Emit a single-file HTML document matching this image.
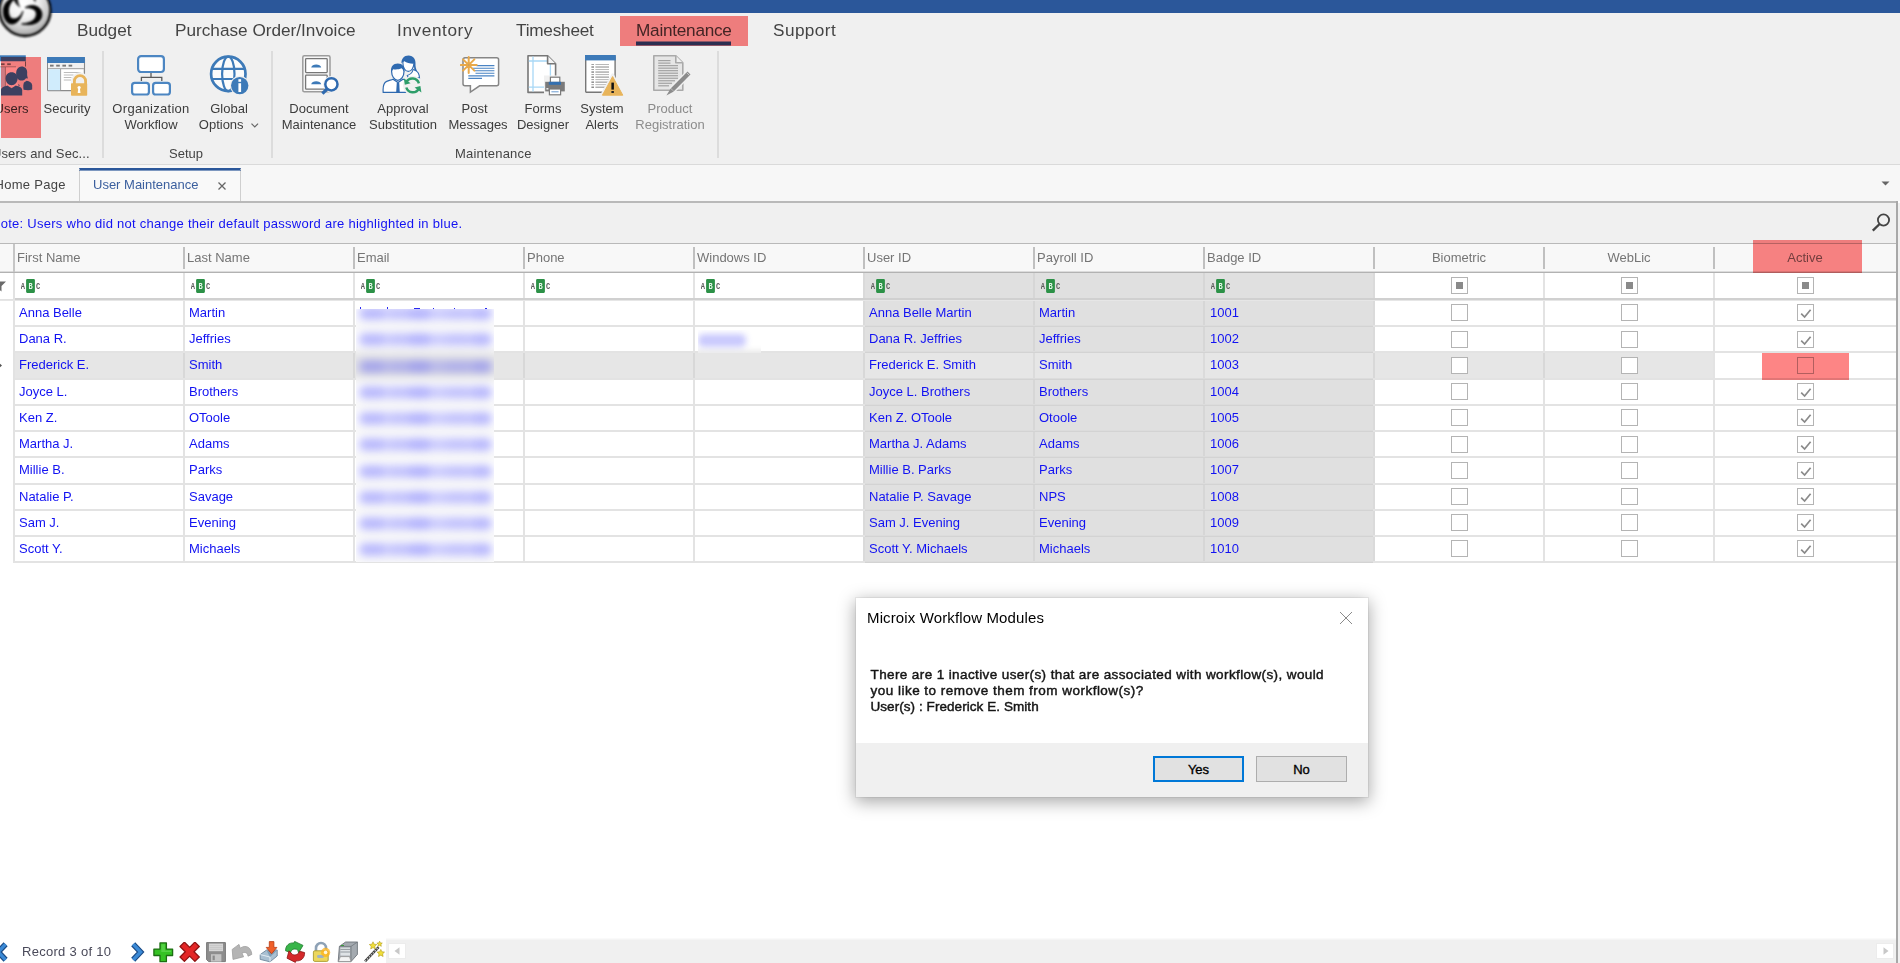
<!DOCTYPE html>
<html lang="en"><head><meta charset="utf-8"><title>User Maintenance</title>
<style>
html,body{margin:0;padding:0;}
body{width:1900px;height:963px;overflow:hidden;position:relative;background:#fff;font-family:"Liberation Sans",sans-serif;font-size:13px;color:#3c3c3c;}
.a{position:absolute;}
.t{position:absolute;white-space:nowrap;}
.mt{position:absolute;top:16px;height:30px;line-height:29px;font-size:17.2px;color:#444;white-space:nowrap;}
.rl{position:absolute;white-space:nowrap;text-align:center;font-size:13px;line-height:16px;color:#3c3c3c;transform:translateX(-50%);}
.gl{position:absolute;top:146px;height:16px;line-height:16px;font-size:13px;color:#444;white-space:nowrap;}
.sep{position:absolute;top:51px;height:107px;width:2px;background:#dcdcdc;}
.hd{position:absolute;top:244px;height:28px;line-height:28px;font-size:13px;color:#757575;white-space:nowrap;}
.hs{position:absolute;top:247px;height:22px;width:2px;background:#c0c0c0;}
.vl{position:absolute;width:2px;background:#e3e3e3;}
.hl{position:absolute;height:2px;background:#e3e3e3;}
.c{position:absolute;white-space:nowrap;font-size:13px;color:#1212f2;height:27px;line-height:27px;}
.cb{position:absolute;width:15px;height:15px;border:1px solid #b4b4b4;background:#fff;}
.abc{position:absolute;width:20px;height:14px;}
.blur{position:absolute;filter:blur(2.2px);}
</style></head><body>

<div class="a" style="left:0;top:0;width:1900px;height:13px;background:#2b579a"></div>
<div class="a" style="left:0;top:13px;width:1900px;height:151px;background:#f0f0f0"></div>
<div class="a" style="left:0;top:164px;width:1900px;height:1px;background:#dadada"></div>
<svg class="a" style="left:-2px;top:-2px" width="56" height="42" viewBox="0 0 56 42"><defs><radialGradient id="lg" cx="0.46" cy="0.36" r="0.62"><stop offset="0" stop-color="#ffffff"/><stop offset="0.45" stop-color="#f2f2f2"/><stop offset="0.8" stop-color="#cacaca"/><stop offset="1" stop-color="#a8a8a8"/></radialGradient></defs><circle cx="27" cy="12.500" r="25.600" fill="url(#lg)"/></svg><svg class="a" style="left:-2px;top:-2px;filter:blur(0.8px)" width="56" height="42" viewBox="0 0 56 42"><circle cx="27" cy="12.500" r="25.500" fill="none" stroke="#000" stroke-width="2.300"/>
<path d="M13.500 0C8 3 5 8.500 5.300 14C5.600 21 9.500 26.200 14 26C19.500 25.800 23.500 20 25 13C23 17.500 19.500 21 16 21C12 21 10.300 17 10.500 12C10.700 7.500 13.500 3 17.500 0z" fill="#000" stroke="#000" stroke-width="0.900"/>
<path d="M27 9.700C31 7 37 6.800 40.500 9.500C44.500 12.500 45 18 42 22C38 27 30 27.300 23.700 26C29 25.600 34.500 24 37 20.500C39 17.500 38.800 13.500 36 11.500C33.500 9.800 30 9.600 27 9.700z" fill="#000" stroke="#000" stroke-width="0.900"/>
<path d="M15.200 0C16 4 18.500 7.500 22.500 9.700C20.800 6.500 19.800 3.500 19.800 0z" fill="#1a1a1a"/>
<path d="M35 0C35.600 2 36.400 3.400 37.600 4.400C37.400 3 37.600 1.500 38.200 0z" fill="#2a2a2a"/></svg>
<div class="a" style="left:636px;top:42px;width:95px;height:3px;background:#2b579a"></div>
<div class="a" style="left:636px;top:41px;width:95px;height:1px;background:rgba(43,87,154,0.5)"></div>
<div class="a" style="left:636px;top:45px;width:95px;height:1px;background:rgba(43,87,154,0.5)"></div>
<div class="mt" style="left:77px;letter-spacing:0px">Budget</div>
<div class="mt" style="left:175px;letter-spacing:0px">Purchase Order/Invoice</div>
<div class="mt" style="left:397px;letter-spacing:0.6px">Inventory</div>
<div class="mt" style="left:516px;letter-spacing:-0.22px">Timesheet</div>
<div class="mt" style="left:636px;letter-spacing:-0.25px">Maintenance</div>
<div class="mt" style="left:773px;letter-spacing:0.43px">Support</div>
<svg class="a" style="left:0px;top:55px" width="34" height="41" viewBox="0 0 34 41"><rect x="-2" y="0.3" width="27.8" height="6.2" fill="#3d7ab8"/>
<path d="M25.5 6.5V11.5" stroke="#7a7a7a" stroke-width="1"/>
<rect x="-2" y="6.5" width="27" height="5" fill="#f4f4f4"/>
<rect x="1" y="8.3" width="3.6" height="1.8" fill="#7a7a7a"/><rect x="7.2" y="8.3" width="3.6" height="1.8" fill="#7a7a7a"/>
<rect x="-2" y="12" width="7.4" height="20" fill="#d0ecfc"/><rect x="5.4" y="12" width="12" height="20" fill="#fff"/><path d="M5.4 12V31M-2 11.8H16" stroke="#999" stroke-width="0.8"/>
<g fill="#3d7ab8">
<path d="M21.6 11.6c3.4 0 5.6 2.4 5.6 5.6c0 1.2 -0.2 2.2 0 3.4c0.2 1.4 0.8 2.6 0.6 3l-1.8 -0.4c-1 1.4 -2.6 2.4 -4.4 2.4c-2.2 0 -3.8 -1.2 -4.8 -3.2l-0.6 -2.6c-0.4 -4.6 1.6 -8.2 5.4 -8.200z"/>
<path d="M24 27.500l2.600 -1.800c3 0.400 5.400 1.800 5.600 4.600v4.200c-2 0.800 -5.400 0.800 -8.600 0.200c-0.600 -2.800 -0.400 -5.200 0.400 -7.200z"/>
<path d="M18.200 28.800l1.600 1.400l-1 1.200z"/>
<path d="M11.600 17.200c3.600 0 6 2.600 6 6c0 3.800 -2.600 7 -6 7s-6 -3.200 -6 -7c0 -3.400 2.400 -6 6 -6z"/>
<path d="M1 40.500v-5.500c0 -2.600 2.600 -3.600 6.400 -4.600l4.200 2.800l4.200 -2.800c3.800 1 6.400 2 6.400 4.600v5.500z"/>
</g></svg>
<svg class="a" style="left:47px;top:57px" width="41" height="39" viewBox="0 0 41 39"><rect x="0.5" y="0.5" width="36.900" height="33.2" rx="1.2" fill="#fff" stroke="#8a8a8a" stroke-width="1.3"/>
<rect x="0" y="0" width="37.900" height="6" fill="#3d7ab8"/>
<rect x="1.2" y="6" width="35.500" height="5.4" fill="#f1f1f1"/>
<path d="M1 11.700H36.900M13.600 12V33.400" stroke="#9a9a9a" stroke-width="1"/>
<g fill="#7a7a7a"><rect x="3" y="7.700" width="3.600" height="1.900"/><rect x="9.200" y="7.700" width="3.600" height="1.900"/><rect x="15.400" y="7.700" width="3.600" height="1.900"/><rect x="21.600" y="7.700" width="3.600" height="1.900"/></g>
<rect x="1.400" y="12.200" width="11.700" height="21" fill="#d0ecfc"/>
<path d="M16.800 15.500H33.500M16.800 18H26.500M16.800 20.500H24.500M16.800 23H24" stroke="#b4b4b4" stroke-width="0.9"/>
<path d="M26.800 27.500V24.200a6.200 6.200 0 0 1 12.400 0V27.500" fill="none" stroke="#f0f0f0" stroke-width="5.400"/>
<path d="M26.800 27.500V24.200a5.600 5.600 0 0 1 11.200 0V27.500" fill="#f0f0f0" stroke="#e8b45a" stroke-width="2.800" transform="translate(0.600 0)"/>
<rect x="24" y="26.300" width="16.200" height="12.400" rx="0.800" fill="#e8b45a"/>
<circle cx="32.100" cy="30.500" r="1.600" fill="#fff"/><path d="M31.300 31l-0.600 5h2.800l-0.600 -5z" fill="#fff"/></svg>
<svg class="a" style="left:131px;top:55px" width="40" height="41" viewBox="0 0 40 41"><rect x="7.100" y="1.200" width="25.800" height="15.800" rx="3" fill="#fff" stroke="#4c86c2" stroke-width="2.200"/>
<path d="M20 18V22.500M10.400 26V22.400H30.800V26" fill="none" stroke="#5a5a5a" stroke-width="1.300"/>
<rect x="1.100" y="27.900" width="16.800" height="11.600" rx="2.600" fill="#fff" stroke="#4c86c2" stroke-width="2.200"/>
<rect x="22.100" y="27.900" width="16.800" height="11.600" rx="2.600" fill="#fff" stroke="#4c86c2" stroke-width="2.200"/></svg>
<svg class="a" style="left:209px;top:54px" width="42" height="43" viewBox="0 0 42 43"><circle cx="19.300" cy="19.900" r="17.200" fill="#fbfbfb" stroke="#3d7ab8" stroke-width="2.700"/>
<path d="M3.500 14.900H35M3.500 25H35" stroke="#3d7ab8" stroke-width="2.200"/>
<ellipse cx="19.300" cy="19.900" rx="6.200" ry="17.200" fill="none" stroke="#3d7ab8" stroke-width="2.200"/>
<circle cx="30.700" cy="31.600" r="9.800" fill="#f0f0f0"/>
<circle cx="30.700" cy="31.600" r="8.700" fill="#3d7ab8"/>
<rect x="29.400" y="29.200" width="2.700" height="8.800" fill="#fff"/><rect x="29.400" y="25.200" width="2.700" height="2.600" fill="#fff"/></svg>
<svg class="a" style="left:301.5px;top:54.6px" width="40" height="41" viewBox="0 0 40 41"><rect x="0.800" y="0.800" width="27.200" height="36" rx="1.500" fill="#f6f6f6" stroke="#9c9c9c" stroke-width="1.500"/>
<rect x="3.600" y="3.600" width="21.600" height="14" rx="0.800" fill="#fff" stroke="#777" stroke-width="1.300"/>
<rect x="3.600" y="20.200" width="21.600" height="14" rx="0.800" fill="#fff" stroke="#777" stroke-width="1.300"/>
<path d="M9.200 12.600c0.400 -4 9.600 -4 10 0z" fill="#3d7ab8"/><path d="M9.200 29.200c0.400 -4 9.600 -4 10 0z" fill="#3d7ab8"/>
<circle cx="29.400" cy="29.300" r="8.300" fill="#f0f0f0"/>
<circle cx="29.400" cy="29.300" r="6.100" fill="#fff" stroke="#2f6ab0" stroke-width="2.500"/>
<path d="M25 34l-4.600 4.600" stroke="#2f6ab0" stroke-width="3.200"/></svg>
<svg class="a" style="left:382.4px;top:55px" width="42" height="41" viewBox="0 0 42 41"><g transform="translate(-1.700 0)"><g fill="#fff" stroke="#2f6ab0" stroke-width="1.100">
<path d="M27 20.500c3 -1 5.200 -3.200 5.800 -6c2.400 0.600 5 2 6 5.600l0.400 2.800h-11z"/>
<path d="M22.600 8c0 -3.600 2.200 -6.400 5.600 -6.400c3.600 0 5.600 3 5.400 6.600c-0.200 4.400 -2.400 8.200 -5.600 8.200c-3 0 -5.400 -3.800 -5.400 -8.400z"/>
</g>
<path d="M21.200 8.600c-0.400 -5 2.600 -8.200 7 -8.200c4.800 0 7.400 3.800 7 8.400c-0.200 2.400 0.600 5.400 1.600 7.600l-2.400 -0.600c-0.800 -2 -0.600 -4.600 -0.800 -7.200c-2.800 0.200 -7.600 -0.600 -9.400 -2.400c-1.200 0.400 -2.400 1.200 -3 2.400z" fill="#2f6ab0"/></g>
<g fill="#fff" stroke="#2f6ab0" stroke-width="1.200">
<path d="M1.200 37.400c-0.400 -4.800 0.400 -9.600 3.400 -11c2 -1 4.600 -1.400 6.400 -2.200l5 3.400l5 -3.400c2 0.800 4.600 1.400 6.400 2.200v11z"/>
<path d="M9.600 16.500c0 -3.600 2.600 -6.300 6.200 -6.300s6.200 2.700 6.200 6.300c0 4.600 -2.800 8.800 -6.200 8.800s-6.200 -4.200 -6.200 -8.800z"/>
</g>
<path d="M9.400 17c-1 -5.400 1.800 -8.400 6.400 -8.400c4.600 0 7.200 3 6.400 8.400c-0.800 -2 -1.600 -3 -2.600 -3.800c-2.400 1.200 -6 1.400 -8.200 1c-1 0.600 -1.600 1.600 -2 2.800z" fill="#2f6ab0"/>
<path d="M14.800 27.600h2.400l0.600 9.800h-3.600z" fill="#2f6ab0"/>
<circle cx="30.600" cy="30.400" r="9.600" fill="#f0f0f0"/>
<g fill="none" stroke="#2e9e6a" stroke-width="2.500">
<path d="M24.300 27.300a6.800 6.800 0 0 1 12.600 1"/>
<path d="M36.900 33.500a6.800 6.800 0 0 1 -12.600 -1"/>
</g>
<path d="M21.800 23.200l1 6.600l5.800 -1.600z" fill="#2e9e6a"/><path d="M39.400 37.600l-1 -6.600l-5.800 1.600z" fill="#2e9e6a"/></svg>
<svg class="a" style="left:459.6px;top:56px" width="42" height="38" viewBox="0 0 42 38"><path d="M5 1.800h31.600a2 2 0 0 1 2 2v24a2 2 0 0 1 -2 2H19.600L10.400 36V29.800H5a2 2 0 0 1 -2 -2v-24a2 2 0 0 1 2 -2z" fill="#fff" stroke="#868686" stroke-width="1.500"/>
<path d="M16.500 9.600H34.400M13 12.200H34.400M15 14.800H34.400M15.500 17.300H34.400M8.300 19.900H34.400M8.300 22.400H22" stroke="#4a84c4" stroke-width="1.100"/>
<circle cx="8.700" cy="9" r="9" fill="none"/>
<path d="M0.70 9.00L16.70 9.00M3.04 3.34L14.36 14.66M8.70 1.00L8.70 17.00M14.36 3.34L3.04 14.66" stroke="#e8a94a" stroke-width="2" stroke-linecap="round"/>
<circle cx="8.700" cy="9" r="2.400" fill="#e8a94a"/><circle cx="8.700" cy="9" r="0.900" fill="#c9a060"/></svg>
<svg class="a" style="left:527px;top:54.8px" width="40" height="41" viewBox="0 0 40 41"><path d="M1 0.800H20.600L28.600 8.800V37.400H1z" fill="#fff" stroke="#777" stroke-width="1.600" stroke-linejoin="round"/>
<path d="M6 1.500V36.600M23.400 9V36M1.800 6H20M1.800 32.200H28" stroke="#a8d8f6" stroke-width="1.300"/>
<path d="M20.600 0.800V8.800H28.600" fill="#f4f4f4" stroke="#777" stroke-width="1.600" stroke-linejoin="round"/>
<rect x="17" y="20.500" width="22" height="21" fill="#f0f0f0"/>
<rect x="23.400" y="22.200" width="9.400" height="5.600" fill="#fff" stroke="#7a7a7a" stroke-width="1.200"/>
<rect x="18.200" y="26.800" width="19.600" height="9.600" fill="#7a7a7a"/>
<rect x="21.800" y="26.800" width="12.200" height="3" fill="#3470b0"/>
<rect x="22.400" y="34" width="11.200" height="5.800" fill="#fff" stroke="#7a7a7a" stroke-width="1.200"/>
<path d="M24.400 36.800H31.600" stroke="#6a9ad0" stroke-width="1"/>
<rect x="19.400" y="33" width="2" height="1.600" fill="#e8e8e8"/></svg>
<svg class="a" style="left:584.9px;top:55.4px" width="40" height="42" viewBox="0 0 40 42"><rect x="0.700" y="0.700" width="29.400" height="36.600" rx="1" fill="#fff" stroke="#777" stroke-width="1.400"/>
<rect x="0" y="0" width="30.800" height="5.400" fill="#3d7ab8"/><path d="M6.400 9.50H9" stroke="#a0a0a0" stroke-width="1"/><path d="M10.400 9.50H24" stroke="#b8b8b8" stroke-width="1"/><path d="M6.400 12.02H9" stroke="#555" stroke-width="1"/><path d="M10.400 12.02H24" stroke="#888" stroke-width="1"/><path d="M6.400 14.54H9" stroke="#a0a0a0" stroke-width="1"/><path d="M10.400 14.54H24" stroke="#b8b8b8" stroke-width="1"/><path d="M6.400 17.06H9" stroke="#555" stroke-width="1"/><path d="M10.400 17.06H24" stroke="#888" stroke-width="1"/><path d="M6.400 19.58H9" stroke="#a0a0a0" stroke-width="1"/><path d="M10.400 19.58H24" stroke="#b8b8b8" stroke-width="1"/><path d="M6.400 22.10H9" stroke="#555" stroke-width="1"/><path d="M10.400 22.10H24" stroke="#888" stroke-width="1"/><path d="M6.400 24.62H9" stroke="#a0a0a0" stroke-width="1"/><path d="M10.400 24.62H24" stroke="#b8b8b8" stroke-width="1"/><path d="M6.400 27.14H9" stroke="#555" stroke-width="1"/><path d="M10.400 27.14H24" stroke="#888" stroke-width="1"/><path d="M6.400 29.66H9" stroke="#a0a0a0" stroke-width="1"/><path d="M10.400 29.66H24" stroke="#b8b8b8" stroke-width="1"/><path d="M6.400 32.18H9" stroke="#555" stroke-width="1"/><path d="M10.400 32.18H24" stroke="#888" stroke-width="1"/>
<path d="M27.600 19.500L39 40.600H16.200z" fill="#f0f0f0" stroke="#f0f0f0" stroke-width="2.400" stroke-linejoin="round"/>
<path d="M27.600 21.600L37.800 40.200H17.400z" fill="#e8b45a" stroke="#e8b45a" stroke-width="1" stroke-linejoin="round"/>
<rect x="26.400" y="27.600" width="2.500" height="7" fill="#111"/><rect x="26.400" y="36" width="2.500" height="2" fill="#222"/></svg>
<svg class="a" style="left:652.8px;top:54.6px" width="40" height="42" viewBox="0 0 40 42"><path d="M0.800 0.800H22.800L29.800 7.800V35.200H0.800z" fill="#e6e6e6" stroke="#aaaaaa" stroke-width="1.600" stroke-linejoin="round"/>
<path d="M22.800 0.800V7.800H29.800" fill="#efefef" stroke="#aaaaaa" stroke-width="1.600" stroke-linejoin="round"/><path d="M5.200 5.60H17.5" stroke="#a2a2a2" stroke-width="1.200"/><path d="M5.200 8.12H17.5" stroke="#a2a2a2" stroke-width="1.200"/><path d="M5.200 10.64H25" stroke="#a2a2a2" stroke-width="1.200"/><path d="M5.200 13.16H25" stroke="#a2a2a2" stroke-width="1.200"/><path d="M5.200 15.68H25" stroke="#a2a2a2" stroke-width="1.200"/><path d="M5.200 18.20H25" stroke="#a2a2a2" stroke-width="1.200"/><path d="M5.200 20.72H25" stroke="#a2a2a2" stroke-width="1.200"/><path d="M5.200 23.24H25" stroke="#a2a2a2" stroke-width="1.200"/><path d="M5.200 25.76H22" stroke="#a2a2a2" stroke-width="1.200"/><path d="M5.200 28.28H19" stroke="#a2a2a2" stroke-width="1.200"/><path d="M5.200 30.80H16" stroke="#a2a2a2" stroke-width="1.200"/>
<path d="M36.400 17.600L19 35.200" stroke="#f0f0f0" stroke-width="7"/>
<path d="M36 18L19.400 34.800" stroke="#8c8c8c" stroke-width="4.200"/>
<path d="M33.400 17.400l3.400 3.400" stroke="#c8c8c8" stroke-width="1"/>
<path d="M17.600 33.400l3.200 3.200l-7.400 4z" fill="#8c8c8c"/></svg>
<div class="rl" id="rl_Users" style="left:11.5px;top:101px;color:#3c3c3c">Users</div>
<div class="rl" id="rl_Security" style="left:67px;top:101px;color:#3c3c3c">Security</div>
<div class="rl" id="rl_Org" style="left:151px;top:101px;color:#3c3c3c"><span style="letter-spacing:0.3px">Organization</span><br>Workflow</div>
<div class="rl" id="rl_Global" style="left:229px;top:101px;color:#3c3c3c">Global<br>Options <svg width="8" height="5" viewBox="0 0 8 5" style="margin-left:4px;position:relative;top:-1px"><path d="M0.7 0.7L4 4L7.300 0.7" fill="none" stroke="#666" stroke-width="1.200"/></svg></div>
<div class="rl" id="rl_Doc" style="left:319px;top:101px;color:#3c3c3c">Document<br>Maintenance</div>
<div class="rl" id="rl_Appr" style="left:403px;top:101px;color:#3c3c3c">Approval<br>Substitution</div>
<div class="rl" id="rl_Post" style="left:478px;top:101px;color:#3c3c3c"><span style="position:relative;left:-3.5px">Post</span><br>Messages</div>
<div class="rl" id="rl_Forms" style="left:543px;top:101px;color:#3c3c3c">Forms<br>Designer</div>
<div class="rl" id="rl_Sys" style="left:602px;top:101px;color:#3c3c3c">System<br>Alerts</div>
<div class="rl" id="rl_Prod" style="left:670px;top:101px;color:#8c8c8c">Product<br>Registration</div>
<div class="sep" style="left:102px"></div>
<div class="sep" style="left:271px"></div>
<div class="sep" style="left:717px"></div>
<div class="gl" style="left:-8px;letter-spacing:0.1px">Users and Sec...</div>
<div class="gl" style="left:169px">Setup</div>
<div class="gl" style="left:455px;letter-spacing:0.2px">Maintenance</div>
<div class="a" style="left:0;top:165px;width:1900px;height:36px;background:#f7f7f7"></div>
<div class="a" style="left:0;top:201px;width:1897px;height:2px;background:#b9b9b9"></div>
<div class="a" style="left:79px;top:168px;width:162px;height:33px;background:#f9f9f9;border-left:1px solid #cfcfcf;border-right:1px solid #cfcfcf;border-top:2px solid #2b579a;box-sizing:border-box"></div>
<div class="a" style="left:79px;top:170px;width:162px;height:1px;background:rgba(43,87,154,0.6)"></div>
<div class="t" style="left:-5.5px;top:175px;height:20px;line-height:20px;font-size:13px;color:#444;letter-spacing:0.3px">Home Page</div>
<div class="t" style="left:93px;top:175px;height:20px;line-height:20px;font-size:13px;color:#3b5f9e">User Maintenance</div>
<svg class="a" style="left:217px;top:181px" width="10" height="10" viewBox="0 0 10 10"><path d="M1.5 1.5L8.5 8.5M8.5 1.5L1.5 8.5" stroke="#666" stroke-width="1.3" fill="none"/></svg>
<svg class="a" style="left:1881px;top:181px" width="9" height="5" viewBox="0 0 9 5"><path d="M0.5 0.5h8L4.5 4.5z" fill="#666"/></svg>
<div class="a" style="left:0;top:203px;width:1896px;height:40px;background:#f0f0f0"></div>
<div class="a" style="left:0;top:243px;width:1896px;height:1px;background:#b9b9b9"></div>
<div class="t" id="note" style="left:-9px;top:214px;height:20px;line-height:20px;font-size:13px;color:#1212f2;letter-spacing:0.27px">Note: Users who did not change their default password are highlighted in blue.</div>
<svg class="a" style="left:1871px;top:212px" width="21" height="21" viewBox="0 0 21 21"><circle cx="12.5" cy="8" r="5.6" fill="none" stroke="#444" stroke-width="1.8"/><path d="M8.6 12L1.8 18.6" stroke="#444" stroke-width="2.4" stroke-linecap="butt"/></svg>
<div class="a" style="left:0;top:244px;width:1896px;height:28px;background:#f8f8f8"></div>
<div class="a" style="left:0;top:271px;width:1896px;height:1px;background:#dcdcdc"></div>
<div class="a" style="left:0;top:272px;width:1896px;height:1px;background:#b2b2b2"></div>
<div class="a" style="left:13px;top:244px;width:2px;height:28px;background:#c6c6c6"></div>
<div class="hd" style="left:17px">First Name</div>
<div class="hd" style="left:187px">Last Name</div>
<div class="hd" style="left:357px">Email</div>
<div class="hd" style="left:527px">Phone</div>
<div class="hd" style="left:697px">Windows ID</div>
<div class="hd" style="left:867px">User ID</div>
<div class="hd" style="left:1037px">Payroll ID</div>
<div class="hd" style="left:1207px">Badge ID</div>
<div class="hd" style="left:1459px;transform:translateX(-50%);color:#757575">Biometric</div>
<div class="hd" style="left:1629px;transform:translateX(-50%);color:#757575">WebLic</div>
<div class="hd" style="left:1805px;transform:translateX(-50%);color:#757575">Active</div>
<div class="hs" style="left:183px"></div>
<div class="hs" style="left:353px"></div>
<div class="hs" style="left:523px"></div>
<div class="hs" style="left:693px"></div>
<div class="hs" style="left:863px"></div>
<div class="hs" style="left:1033px"></div>
<div class="hs" style="left:1203px"></div>
<div class="hs" style="left:1373px"></div>
<div class="hs" style="left:1543px"></div>
<div class="hs" style="left:1713px"></div>
<div class="a" style="left:864px;top:273px;width:510px;height:290px;background:#e0e0e0"></div>
<div class="a" style="left:15px;top:353px;width:1699px;height:25px;background:#e6e6e6"></div>
<div class="a" style="left:13px;top:273px;width:2px;height:290px;background:#e2e2e2"></div>
<div class="vl" style="left:183px;top:273px;height:290px;background:#e3e3e3"></div>
<div class="vl" style="left:183px;top:353px;height:25px;background:#d8d8d8"></div>
<div class="vl" style="left:353px;top:273px;height:290px;background:#e3e3e3"></div>
<div class="vl" style="left:353px;top:353px;height:25px;background:#d8d8d8"></div>
<div class="vl" style="left:523px;top:273px;height:290px;background:#e3e3e3"></div>
<div class="vl" style="left:523px;top:353px;height:25px;background:#d8d8d8"></div>
<div class="vl" style="left:693px;top:273px;height:290px;background:#e3e3e3"></div>
<div class="vl" style="left:693px;top:353px;height:25px;background:#d8d8d8"></div>
<div class="vl" style="left:863px;top:273px;height:290px;background:#dadada"></div>
<div class="vl" style="left:863px;top:353px;height:25px;background:#d8d8d8"></div>
<div class="vl" style="left:1033px;top:273px;height:290px;background:#d6d6d6"></div>
<div class="vl" style="left:1033px;top:353px;height:25px;background:#dbdbdb"></div>
<div class="vl" style="left:1203px;top:273px;height:290px;background:#d6d6d6"></div>
<div class="vl" style="left:1203px;top:353px;height:25px;background:#dbdbdb"></div>
<div class="vl" style="left:1373px;top:273px;height:290px;background:#dadada"></div>
<div class="vl" style="left:1373px;top:353px;height:25px;background:#d8d8d8"></div>
<div class="vl" style="left:1543px;top:273px;height:290px;background:#e3e3e3"></div>
<div class="vl" style="left:1543px;top:353px;height:25px;background:#d8d8d8"></div>
<div class="vl" style="left:1713px;top:273px;height:290px;background:#e3e3e3"></div>
<div class="vl" style="left:1713px;top:353px;height:25px;background:#e3e3e3"></div>
<div class="hl" style="left:15px;top:298px;width:1881px;height:2px;background:#d0d0d0"></div>
<div class="hl" style="left:0px;top:300px;width:1896px;height:1px;background:#e6e6e6"></div>
<div class="hl" style="left:0px;top:299px;width:13px;height:1px;background:#e2e2e2"></div>
<div class="hl" style="left:15px;top:325px;width:1881px"></div>
<div class="hl" style="left:865px;top:325px;width:508px;height:1px;background:#dcdcdc"></div>
<div class="hl" style="left:865px;top:326px;width:508px;height:1px;background:#d3d3d3"></div>
<div class="hl" style="left:15px;top:351px;width:1881px"></div>
<div class="hl" style="left:865px;top:351px;width:508px;height:1px;background:#dcdcdc"></div>
<div class="hl" style="left:865px;top:352px;width:508px;height:1px;background:#d3d3d3"></div>
<div class="hl" style="left:15px;top:378px;width:1881px"></div>
<div class="hl" style="left:865px;top:378px;width:508px;height:1px;background:#dcdcdc"></div>
<div class="hl" style="left:865px;top:379px;width:508px;height:1px;background:#d3d3d3"></div>
<div class="hl" style="left:15px;top:404px;width:1881px"></div>
<div class="hl" style="left:865px;top:404px;width:508px;height:1px;background:#dcdcdc"></div>
<div class="hl" style="left:865px;top:405px;width:508px;height:1px;background:#d3d3d3"></div>
<div class="hl" style="left:15px;top:430px;width:1881px"></div>
<div class="hl" style="left:865px;top:430px;width:508px;height:1px;background:#dcdcdc"></div>
<div class="hl" style="left:865px;top:431px;width:508px;height:1px;background:#d3d3d3"></div>
<div class="hl" style="left:15px;top:456px;width:1881px"></div>
<div class="hl" style="left:865px;top:456px;width:508px;height:1px;background:#dcdcdc"></div>
<div class="hl" style="left:865px;top:457px;width:508px;height:1px;background:#d3d3d3"></div>
<div class="hl" style="left:15px;top:483px;width:1881px"></div>
<div class="hl" style="left:865px;top:483px;width:508px;height:1px;background:#dcdcdc"></div>
<div class="hl" style="left:865px;top:484px;width:508px;height:1px;background:#d3d3d3"></div>
<div class="hl" style="left:15px;top:509px;width:1881px"></div>
<div class="hl" style="left:865px;top:509px;width:508px;height:1px;background:#dcdcdc"></div>
<div class="hl" style="left:865px;top:510px;width:508px;height:1px;background:#d3d3d3"></div>
<div class="hl" style="left:15px;top:535px;width:1881px"></div>
<div class="hl" style="left:865px;top:535px;width:508px;height:1px;background:#dcdcdc"></div>
<div class="hl" style="left:865px;top:536px;width:508px;height:1px;background:#d3d3d3"></div>
<div class="hl" style="left:13px;top:561px;width:1883px"></div>
<div class="hl" style="left:865px;top:561px;width:508px;height:1px;background:#dcdcdc"></div>
<div class="hl" style="left:865px;top:562px;width:508px;height:1px;background:#d3d3d3"></div>
<svg class="abc" style="left:21px;top:279px" viewBox="0 0 20 14"><rect x="5.100" y="0.100" width="8.800" height="13.800" rx="1.100" fill="#2c9147"/><g font-family="Liberation Mono,monospace" font-size="9.400" font-weight="bold"><text x="-0.200" y="10.200" textLength="4.200" lengthAdjust="spacingAndGlyphs" fill="#5a5a5a">A</text><text x="7.400" y="10.200" textLength="4.200" lengthAdjust="spacingAndGlyphs" fill="#e6f6ea">B</text><text x="14.900" y="10.200" textLength="4.200" lengthAdjust="spacingAndGlyphs" fill="#5a5a5a">C</text></g></svg>
<svg class="abc" style="left:191px;top:279px" viewBox="0 0 20 14"><rect x="5.100" y="0.100" width="8.800" height="13.800" rx="1.100" fill="#2c9147"/><g font-family="Liberation Mono,monospace" font-size="9.400" font-weight="bold"><text x="-0.200" y="10.200" textLength="4.200" lengthAdjust="spacingAndGlyphs" fill="#5a5a5a">A</text><text x="7.400" y="10.200" textLength="4.200" lengthAdjust="spacingAndGlyphs" fill="#e6f6ea">B</text><text x="14.900" y="10.200" textLength="4.200" lengthAdjust="spacingAndGlyphs" fill="#5a5a5a">C</text></g></svg>
<svg class="abc" style="left:361px;top:279px" viewBox="0 0 20 14"><rect x="5.100" y="0.100" width="8.800" height="13.800" rx="1.100" fill="#2c9147"/><g font-family="Liberation Mono,monospace" font-size="9.400" font-weight="bold"><text x="-0.200" y="10.200" textLength="4.200" lengthAdjust="spacingAndGlyphs" fill="#5a5a5a">A</text><text x="7.400" y="10.200" textLength="4.200" lengthAdjust="spacingAndGlyphs" fill="#e6f6ea">B</text><text x="14.900" y="10.200" textLength="4.200" lengthAdjust="spacingAndGlyphs" fill="#5a5a5a">C</text></g></svg>
<svg class="abc" style="left:531px;top:279px" viewBox="0 0 20 14"><rect x="5.100" y="0.100" width="8.800" height="13.800" rx="1.100" fill="#2c9147"/><g font-family="Liberation Mono,monospace" font-size="9.400" font-weight="bold"><text x="-0.200" y="10.200" textLength="4.200" lengthAdjust="spacingAndGlyphs" fill="#5a5a5a">A</text><text x="7.400" y="10.200" textLength="4.200" lengthAdjust="spacingAndGlyphs" fill="#e6f6ea">B</text><text x="14.900" y="10.200" textLength="4.200" lengthAdjust="spacingAndGlyphs" fill="#5a5a5a">C</text></g></svg>
<svg class="abc" style="left:701px;top:279px" viewBox="0 0 20 14"><rect x="5.100" y="0.100" width="8.800" height="13.800" rx="1.100" fill="#2c9147"/><g font-family="Liberation Mono,monospace" font-size="9.400" font-weight="bold"><text x="-0.200" y="10.200" textLength="4.200" lengthAdjust="spacingAndGlyphs" fill="#5a5a5a">A</text><text x="7.400" y="10.200" textLength="4.200" lengthAdjust="spacingAndGlyphs" fill="#e6f6ea">B</text><text x="14.900" y="10.200" textLength="4.200" lengthAdjust="spacingAndGlyphs" fill="#5a5a5a">C</text></g></svg>
<svg class="abc" style="left:871px;top:279px" viewBox="0 0 20 14"><rect x="5.100" y="0.100" width="8.800" height="13.800" rx="1.100" fill="#2c9147"/><g font-family="Liberation Mono,monospace" font-size="9.400" font-weight="bold"><text x="-0.200" y="10.200" textLength="4.200" lengthAdjust="spacingAndGlyphs" fill="#5a5a5a">A</text><text x="7.400" y="10.200" textLength="4.200" lengthAdjust="spacingAndGlyphs" fill="#e6f6ea">B</text><text x="14.900" y="10.200" textLength="4.200" lengthAdjust="spacingAndGlyphs" fill="#5a5a5a">C</text></g></svg>
<svg class="abc" style="left:1041px;top:279px" viewBox="0 0 20 14"><rect x="5.100" y="0.100" width="8.800" height="13.800" rx="1.100" fill="#2c9147"/><g font-family="Liberation Mono,monospace" font-size="9.400" font-weight="bold"><text x="-0.200" y="10.200" textLength="4.200" lengthAdjust="spacingAndGlyphs" fill="#5a5a5a">A</text><text x="7.400" y="10.200" textLength="4.200" lengthAdjust="spacingAndGlyphs" fill="#e6f6ea">B</text><text x="14.900" y="10.200" textLength="4.200" lengthAdjust="spacingAndGlyphs" fill="#5a5a5a">C</text></g></svg>
<svg class="abc" style="left:1211px;top:279px" viewBox="0 0 20 14"><rect x="5.100" y="0.100" width="8.800" height="13.800" rx="1.100" fill="#2c9147"/><g font-family="Liberation Mono,monospace" font-size="9.400" font-weight="bold"><text x="-0.200" y="10.200" textLength="4.200" lengthAdjust="spacingAndGlyphs" fill="#5a5a5a">A</text><text x="7.400" y="10.200" textLength="4.200" lengthAdjust="spacingAndGlyphs" fill="#e6f6ea">B</text><text x="14.900" y="10.200" textLength="4.200" lengthAdjust="spacingAndGlyphs" fill="#5a5a5a">C</text></g></svg>
<svg class="a" style="left:0;top:281px" width="7" height="11" viewBox="0 0 7 11"><path d="M-4 0.5H6L1.5 5V10.5L-1 8.5V5z" fill="#6a6a6a"/></svg>
<svg class="a" style="left:0;top:362px" width="3" height="7" viewBox="0 0 3 7"><path d="M-2 0L2 3.5L-2 7z" fill="#555"/></svg>
<div class="cb" style="left:1451.0px;top:277.0px;background:#fff;border-color:#b4b4b4"><div class="a" style="left:4px;top:4px;width:7px;height:7px;background:#8a8a8a"></div></div>
<div class="cb" style="left:1621.0px;top:277.0px;background:#fff;border-color:#b4b4b4"><div class="a" style="left:4px;top:4px;width:7px;height:7px;background:#8a8a8a"></div></div>
<div class="cb" style="left:1797.0px;top:277.0px;background:#fff;border-color:#b4b4b4"><div class="a" style="left:4px;top:4px;width:7px;height:7px;background:#8a8a8a"></div></div>
<div class="c" style="left:19px;top:299px">Anna Belle</div>
<div class="c" style="left:189px;top:299px">Martin</div>
<div class="c" style="left:869px;top:299px">Anna Belle Martin</div>
<div class="c" style="left:1039px;top:299px">Martin</div>
<div class="c" style="left:1210px;top:299px">1001</div>
<div class="cb" style="left:1451.0px;top:304.0px;background:#fff;border-color:#b4b4b4"></div>
<div class="cb" style="left:1621.0px;top:304.0px;background:#fff;border-color:#b4b4b4"></div>
<div class="cb" style="left:1797.0px;top:304.0px;background:#fff;border-color:#b4b4b4"><svg class="a" style="left:2px;top:2px" width="12" height="12" viewBox="0 0 12 12"><path d="M1.200 6.700L4.600 10L10.600 2.700" stroke="#8a8a8a" stroke-width="1.700" fill="none"/></svg></div>
<div class="c" style="left:19px;top:325px">Dana R.</div>
<div class="c" style="left:189px;top:325px">Jeffries</div>
<div class="c" style="left:869px;top:325px">Dana R. Jeffries</div>
<div class="c" style="left:1039px;top:325px">Jeffries</div>
<div class="c" style="left:1210px;top:325px">1002</div>
<div class="cb" style="left:1451.0px;top:331.0px;background:#fff;border-color:#b4b4b4"></div>
<div class="cb" style="left:1621.0px;top:331.0px;background:#fff;border-color:#b4b4b4"></div>
<div class="cb" style="left:1797.0px;top:331.0px;background:#fff;border-color:#b4b4b4"><svg class="a" style="left:2px;top:2px" width="12" height="12" viewBox="0 0 12 12"><path d="M1.200 6.700L4.600 10L10.600 2.700" stroke="#8a8a8a" stroke-width="1.700" fill="none"/></svg></div>
<div class="c" style="left:19px;top:351px">Frederick E.</div>
<div class="c" style="left:189px;top:351px">Smith</div>
<div class="c" style="left:869px;top:351px">Frederick E. Smith</div>
<div class="c" style="left:1039px;top:351px">Smith</div>
<div class="c" style="left:1210px;top:351px">1003</div>
<div class="cb" style="left:1451.0px;top:357.0px;background:#fff;border-color:#b4b4b4"></div>
<div class="cb" style="left:1621.0px;top:357.0px;background:#fff;border-color:#b4b4b4"></div>
<div class="cb" style="left:1797.0px;top:357.0px;background:#fff;border-color:#b4b4b4"></div>
<div class="c" style="left:19px;top:378px">Joyce L.</div>
<div class="c" style="left:189px;top:378px">Brothers</div>
<div class="c" style="left:869px;top:378px">Joyce L. Brothers</div>
<div class="c" style="left:1039px;top:378px">Brothers</div>
<div class="c" style="left:1210px;top:378px">1004</div>
<div class="cb" style="left:1451.0px;top:383.0px;background:#fff;border-color:#b4b4b4"></div>
<div class="cb" style="left:1621.0px;top:383.0px;background:#fff;border-color:#b4b4b4"></div>
<div class="cb" style="left:1797.0px;top:383.0px;background:#fff;border-color:#b4b4b4"><svg class="a" style="left:2px;top:2px" width="12" height="12" viewBox="0 0 12 12"><path d="M1.200 6.700L4.600 10L10.600 2.700" stroke="#8a8a8a" stroke-width="1.700" fill="none"/></svg></div>
<div class="c" style="left:19px;top:404px">Ken Z.</div>
<div class="c" style="left:189px;top:404px">OToole</div>
<div class="c" style="left:869px;top:404px">Ken Z. OToole</div>
<div class="c" style="left:1039px;top:404px">Otoole</div>
<div class="c" style="left:1210px;top:404px">1005</div>
<div class="cb" style="left:1451.0px;top:409.0px;background:#fff;border-color:#b4b4b4"></div>
<div class="cb" style="left:1621.0px;top:409.0px;background:#fff;border-color:#b4b4b4"></div>
<div class="cb" style="left:1797.0px;top:409.0px;background:#fff;border-color:#b4b4b4"><svg class="a" style="left:2px;top:2px" width="12" height="12" viewBox="0 0 12 12"><path d="M1.200 6.700L4.600 10L10.600 2.700" stroke="#8a8a8a" stroke-width="1.700" fill="none"/></svg></div>
<div class="c" style="left:19px;top:430px">Martha J.</div>
<div class="c" style="left:189px;top:430px">Adams</div>
<div class="c" style="left:869px;top:430px">Martha J. Adams</div>
<div class="c" style="left:1039px;top:430px">Adams</div>
<div class="c" style="left:1210px;top:430px">1006</div>
<div class="cb" style="left:1451.0px;top:436.0px;background:#fff;border-color:#b4b4b4"></div>
<div class="cb" style="left:1621.0px;top:436.0px;background:#fff;border-color:#b4b4b4"></div>
<div class="cb" style="left:1797.0px;top:436.0px;background:#fff;border-color:#b4b4b4"><svg class="a" style="left:2px;top:2px" width="12" height="12" viewBox="0 0 12 12"><path d="M1.200 6.700L4.600 10L10.600 2.700" stroke="#8a8a8a" stroke-width="1.700" fill="none"/></svg></div>
<div class="c" style="left:19px;top:456px">Millie B.</div>
<div class="c" style="left:189px;top:456px">Parks</div>
<div class="c" style="left:869px;top:456px">Millie B. Parks</div>
<div class="c" style="left:1039px;top:456px">Parks</div>
<div class="c" style="left:1210px;top:456px">1007</div>
<div class="cb" style="left:1451.0px;top:462.0px;background:#fff;border-color:#b4b4b4"></div>
<div class="cb" style="left:1621.0px;top:462.0px;background:#fff;border-color:#b4b4b4"></div>
<div class="cb" style="left:1797.0px;top:462.0px;background:#fff;border-color:#b4b4b4"><svg class="a" style="left:2px;top:2px" width="12" height="12" viewBox="0 0 12 12"><path d="M1.200 6.700L4.600 10L10.600 2.700" stroke="#8a8a8a" stroke-width="1.700" fill="none"/></svg></div>
<div class="c" style="left:19px;top:483px">Natalie P.</div>
<div class="c" style="left:189px;top:483px">Savage</div>
<div class="c" style="left:869px;top:483px">Natalie P. Savage</div>
<div class="c" style="left:1039px;top:483px">NPS</div>
<div class="c" style="left:1210px;top:483px">1008</div>
<div class="cb" style="left:1451.0px;top:488.0px;background:#fff;border-color:#b4b4b4"></div>
<div class="cb" style="left:1621.0px;top:488.0px;background:#fff;border-color:#b4b4b4"></div>
<div class="cb" style="left:1797.0px;top:488.0px;background:#fff;border-color:#b4b4b4"><svg class="a" style="left:2px;top:2px" width="12" height="12" viewBox="0 0 12 12"><path d="M1.200 6.700L4.600 10L10.600 2.700" stroke="#8a8a8a" stroke-width="1.700" fill="none"/></svg></div>
<div class="c" style="left:19px;top:509px">Sam J.</div>
<div class="c" style="left:189px;top:509px">Evening</div>
<div class="c" style="left:869px;top:509px">Sam J. Evening</div>
<div class="c" style="left:1039px;top:509px">Evening</div>
<div class="c" style="left:1210px;top:509px">1009</div>
<div class="cb" style="left:1451.0px;top:514.0px;background:#fff;border-color:#b4b4b4"></div>
<div class="cb" style="left:1621.0px;top:514.0px;background:#fff;border-color:#b4b4b4"></div>
<div class="cb" style="left:1797.0px;top:514.0px;background:#fff;border-color:#b4b4b4"><svg class="a" style="left:2px;top:2px" width="12" height="12" viewBox="0 0 12 12"><path d="M1.200 6.700L4.600 10L10.600 2.700" stroke="#8a8a8a" stroke-width="1.700" fill="none"/></svg></div>
<div class="c" style="left:19px;top:535px">Scott Y.</div>
<div class="c" style="left:189px;top:535px">Michaels</div>
<div class="c" style="left:869px;top:535px">Scott Y. Michaels</div>
<div class="c" style="left:1039px;top:535px">Michaels</div>
<div class="c" style="left:1210px;top:535px">1010</div>
<div class="cb" style="left:1451.0px;top:540.0px;background:#fff;border-color:#b4b4b4"></div>
<div class="cb" style="left:1621.0px;top:540.0px;background:#fff;border-color:#b4b4b4"></div>
<div class="cb" style="left:1797.0px;top:540.0px;background:#fff;border-color:#b4b4b4"><svg class="a" style="left:2px;top:2px" width="12" height="12" viewBox="0 0 12 12"><path d="M1.200 6.700L4.600 10L10.600 2.700" stroke="#8a8a8a" stroke-width="1.700" fill="none"/></svg></div>
<div class="a" style="left:356px;top:309px;width:138px;height:253px;overflow:hidden;background:#fff"><div class="a" style="left:0;top:0;width:138px;height:253px;filter:blur(4px)"><div class="a" style="left:-10px;top:16px;width:158px;height:2px;background:#e3e3e3"></div><div class="a" style="left:-10px;top:42px;width:158px;height:2px;background:#e3e3e3"></div><div class="a" style="left:-10px;top:69px;width:158px;height:2px;background:#e3e3e3"></div><div class="a" style="left:-10px;top:95px;width:158px;height:2px;background:#e3e3e3"></div><div class="a" style="left:-10px;top:121px;width:158px;height:2px;background:#e3e3e3"></div><div class="a" style="left:-10px;top:147px;width:158px;height:2px;background:#e3e3e3"></div><div class="a" style="left:-10px;top:174px;width:158px;height:2px;background:#e3e3e3"></div><div class="a" style="left:-10px;top:200px;width:158px;height:2px;background:#e3e3e3"></div><div class="a" style="left:-10px;top:226px;width:158px;height:2px;background:#e3e3e3"></div><div class="a" style="left:-10px;top:252px;width:158px;height:2px;background:#e3e3e3"></div><div class="a" style="left:-10px;top:44px;width:158px;height:25px;background:#e6e6e6"></div><div class="a" style="left:2px;top:-2.2px;width:134px;height:13px;border-radius:5px;background:rgba(30,30,245,0.23)"></div><div class="a" style="left:6px;top:-2.2px;width:22px;height:13px;border-radius:5px;background:rgba(30,30,245,0.11)"></div><div class="a" style="left:34px;top:-2.2px;width:18px;height:13px;border-radius:5px;background:rgba(30,30,245,0.05)"></div><div class="a" style="left:52px;top:-2.2px;width:22px;height:13px;border-radius:5px;background:rgba(30,30,245,0.14)"></div><div class="a" style="left:90px;top:-2.2px;width:24px;height:13px;border-radius:5px;background:rgba(30,30,245,0.05)"></div><div class="a" style="left:116px;top:-2.2px;width:20px;height:13px;border-radius:5px;background:rgba(30,30,245,0.11)"></div><div class="a" style="left:2px;top:24.3px;width:134px;height:13px;border-radius:5px;background:rgba(30,30,245,0.23)"></div><div class="a" style="left:6px;top:24.3px;width:22px;height:13px;border-radius:5px;background:rgba(30,30,245,0.11)"></div><div class="a" style="left:34px;top:24.3px;width:18px;height:13px;border-radius:5px;background:rgba(30,30,245,0.05)"></div><div class="a" style="left:52px;top:24.3px;width:22px;height:13px;border-radius:5px;background:rgba(30,30,245,0.14)"></div><div class="a" style="left:90px;top:24.3px;width:24px;height:13px;border-radius:5px;background:rgba(30,30,245,0.05)"></div><div class="a" style="left:116px;top:24.3px;width:20px;height:13px;border-radius:5px;background:rgba(30,30,245,0.11)"></div><div class="a" style="left:2px;top:50.8px;width:134px;height:13px;border-radius:5px;background:rgba(30,30,245,0.23)"></div><div class="a" style="left:6px;top:50.8px;width:22px;height:13px;border-radius:5px;background:rgba(30,30,245,0.11)"></div><div class="a" style="left:34px;top:50.8px;width:18px;height:13px;border-radius:5px;background:rgba(30,30,245,0.05)"></div><div class="a" style="left:52px;top:50.8px;width:22px;height:13px;border-radius:5px;background:rgba(30,30,245,0.14)"></div><div class="a" style="left:90px;top:50.8px;width:24px;height:13px;border-radius:5px;background:rgba(30,30,245,0.05)"></div><div class="a" style="left:116px;top:50.8px;width:20px;height:13px;border-radius:5px;background:rgba(30,30,245,0.11)"></div><div class="a" style="left:2px;top:77.3px;width:134px;height:13px;border-radius:5px;background:rgba(30,30,245,0.23)"></div><div class="a" style="left:6px;top:77.3px;width:22px;height:13px;border-radius:5px;background:rgba(30,30,245,0.11)"></div><div class="a" style="left:34px;top:77.3px;width:18px;height:13px;border-radius:5px;background:rgba(30,30,245,0.05)"></div><div class="a" style="left:52px;top:77.3px;width:22px;height:13px;border-radius:5px;background:rgba(30,30,245,0.14)"></div><div class="a" style="left:90px;top:77.3px;width:24px;height:13px;border-radius:5px;background:rgba(30,30,245,0.05)"></div><div class="a" style="left:116px;top:77.3px;width:20px;height:13px;border-radius:5px;background:rgba(30,30,245,0.11)"></div><div class="a" style="left:2px;top:103.3px;width:134px;height:13px;border-radius:5px;background:rgba(30,30,245,0.23)"></div><div class="a" style="left:6px;top:103.3px;width:22px;height:13px;border-radius:5px;background:rgba(30,30,245,0.11)"></div><div class="a" style="left:34px;top:103.3px;width:18px;height:13px;border-radius:5px;background:rgba(30,30,245,0.05)"></div><div class="a" style="left:52px;top:103.3px;width:22px;height:13px;border-radius:5px;background:rgba(30,30,245,0.14)"></div><div class="a" style="left:90px;top:103.3px;width:24px;height:13px;border-radius:5px;background:rgba(30,30,245,0.05)"></div><div class="a" style="left:116px;top:103.3px;width:20px;height:13px;border-radius:5px;background:rgba(30,30,245,0.11)"></div><div class="a" style="left:2px;top:129.3px;width:134px;height:13px;border-radius:5px;background:rgba(30,30,245,0.23)"></div><div class="a" style="left:6px;top:129.3px;width:22px;height:13px;border-radius:5px;background:rgba(30,30,245,0.11)"></div><div class="a" style="left:34px;top:129.3px;width:18px;height:13px;border-radius:5px;background:rgba(30,30,245,0.05)"></div><div class="a" style="left:52px;top:129.3px;width:22px;height:13px;border-radius:5px;background:rgba(30,30,245,0.14)"></div><div class="a" style="left:90px;top:129.3px;width:24px;height:13px;border-radius:5px;background:rgba(30,30,245,0.05)"></div><div class="a" style="left:116px;top:129.3px;width:20px;height:13px;border-radius:5px;background:rgba(30,30,245,0.11)"></div><div class="a" style="left:2px;top:155.8px;width:134px;height:13px;border-radius:5px;background:rgba(30,30,245,0.23)"></div><div class="a" style="left:6px;top:155.8px;width:22px;height:13px;border-radius:5px;background:rgba(30,30,245,0.11)"></div><div class="a" style="left:34px;top:155.8px;width:18px;height:13px;border-radius:5px;background:rgba(30,30,245,0.05)"></div><div class="a" style="left:52px;top:155.8px;width:22px;height:13px;border-radius:5px;background:rgba(30,30,245,0.14)"></div><div class="a" style="left:90px;top:155.8px;width:24px;height:13px;border-radius:5px;background:rgba(30,30,245,0.05)"></div><div class="a" style="left:116px;top:155.8px;width:20px;height:13px;border-radius:5px;background:rgba(30,30,245,0.11)"></div><div class="a" style="left:2px;top:182.3px;width:134px;height:13px;border-radius:5px;background:rgba(30,30,245,0.23)"></div><div class="a" style="left:6px;top:182.3px;width:22px;height:13px;border-radius:5px;background:rgba(30,30,245,0.11)"></div><div class="a" style="left:34px;top:182.3px;width:18px;height:13px;border-radius:5px;background:rgba(30,30,245,0.05)"></div><div class="a" style="left:52px;top:182.3px;width:22px;height:13px;border-radius:5px;background:rgba(30,30,245,0.14)"></div><div class="a" style="left:90px;top:182.3px;width:24px;height:13px;border-radius:5px;background:rgba(30,30,245,0.05)"></div><div class="a" style="left:116px;top:182.3px;width:20px;height:13px;border-radius:5px;background:rgba(30,30,245,0.11)"></div><div class="a" style="left:2px;top:208.3px;width:134px;height:13px;border-radius:5px;background:rgba(30,30,245,0.23)"></div><div class="a" style="left:6px;top:208.3px;width:22px;height:13px;border-radius:5px;background:rgba(30,30,245,0.11)"></div><div class="a" style="left:34px;top:208.3px;width:18px;height:13px;border-radius:5px;background:rgba(30,30,245,0.05)"></div><div class="a" style="left:52px;top:208.3px;width:22px;height:13px;border-radius:5px;background:rgba(30,30,245,0.14)"></div><div class="a" style="left:90px;top:208.3px;width:24px;height:13px;border-radius:5px;background:rgba(30,30,245,0.05)"></div><div class="a" style="left:116px;top:208.3px;width:20px;height:13px;border-radius:5px;background:rgba(30,30,245,0.11)"></div><div class="a" style="left:2px;top:234.3px;width:134px;height:13px;border-radius:5px;background:rgba(30,30,245,0.23)"></div><div class="a" style="left:6px;top:234.3px;width:22px;height:13px;border-radius:5px;background:rgba(30,30,245,0.11)"></div><div class="a" style="left:34px;top:234.3px;width:18px;height:13px;border-radius:5px;background:rgba(30,30,245,0.05)"></div><div class="a" style="left:52px;top:234.3px;width:22px;height:13px;border-radius:5px;background:rgba(30,30,245,0.14)"></div><div class="a" style="left:90px;top:234.3px;width:24px;height:13px;border-radius:5px;background:rgba(30,30,245,0.05)"></div><div class="a" style="left:116px;top:234.3px;width:20px;height:13px;border-radius:5px;background:rgba(30,30,245,0.11)"></div></div></div>
<div class="a" style="left:359.5px;top:306.5px;width:1.2px;height:2.5px;background:#2a2af0"></div>
<div class="a" style="left:387px;top:306.5px;width:1.2px;height:2.5px;background:#2a2af0"></div>
<div class="a" style="left:413.5px;top:308px;width:6px;height:1.2px;background:#2a2af0"></div>
<div class="a" style="left:432.5px;top:308px;width:1.5px;height:1px;background:#2a2af0"></div>
<div class="a" style="left:453.5px;top:308px;width:1.5px;height:1px;background:#2a2af0"></div>
<div class="a" style="left:485px;top:308px;width:1.5px;height:1px;background:#2a2af0"></div>
<div class="a" style="left:698px;top:330px;width:63px;height:23px;overflow:hidden;background:#fff"><div class="a" style="left:0;top:0;width:63px;height:23px;filter:blur(3.2px)"><div class="a" style="left:-10px;top:21px;width:83px;height:2px;background:#e3e3e3"></div><div class="a" style="left:-10px;top:23px;width:83px;height:12px;background:#e6e6e6"></div><div class="a" style="left:0px;top:3.5px;width:48px;height:13px;border-radius:5px;background:rgba(30,30,245,0.24)"></div></div></div>
<div class="a" style="left:620px;top:16px;width:128px;height:30px;background:#fd8585;mix-blend-mode:multiply"></div>
<div class="a" style="left:1px;top:57px;width:40px;height:81px;background:#fd8585;mix-blend-mode:multiply"></div>
<div class="a" style="left:1753px;top:240px;width:109px;height:33px;background:#fd8585;mix-blend-mode:multiply"></div>
<div class="a" style="left:1762px;top:353px;width:87px;height:27px;background:#fd8585;mix-blend-mode:multiply"></div>
<div class="a" style="left:1896px;top:201px;width:2px;height:762px;background:#a8a8a8"></div>
<div class="a" style="left:1898px;top:203px;width:2px;height:760px;background:#f0f0f0"></div>
<div class="a" style="left:386px;top:938px;width:1510px;height:1px;background:#fafafa"></div>
<div class="a" style="left:386px;top:939px;width:1510px;height:1px;background:#f5f5f5"></div>
<div class="a" style="left:386px;top:940px;width:1510px;height:23px;background:#f0f0f0"></div>
<div class="a" style="left:388px;top:943px;width:18px;height:16px;background:#fff;border:1px solid #ececec;box-sizing:border-box"></div>
<svg class="a" style="left:394px;top:947px" width="6" height="8" viewBox="0 0 6 8"><path d="M5.5 0.3V7.7L0.5 4z" fill="#c8c8c8"/></svg>
<div class="a" style="left:1876px;top:943px;width:18px;height:16px;background:#fff;border:1px solid #ececec;box-sizing:border-box"></div>
<svg class="a" style="left:1883px;top:947px" width="6" height="8" viewBox="0 0 6 8"><path d="M0.5 0.3V7.7L5.5 4z" fill="#c8c8c8"/></svg>
<div class="t" id="rec" style="left:22px;top:942px;height:20px;line-height:20px;font-size:13px;color:#4a4a5a;letter-spacing:0.28px">Record 3 of 10</div>
<svg class="a" style="left:0px;top:941px" width="8" height="22" viewBox="0 0 8 22"><path d="M5.600 3.200L-1.800 11L5.600 18.800" fill="none" stroke="#1b4a84" stroke-width="5.600"/><path d="M5.600 3.200L-1.800 11L5.600 18.800" fill="none" stroke="#3b8ad6" stroke-width="3.400"/></svg>
<svg class="a" style="left:129px;top:941px" width="16" height="22" viewBox="0 0 16 22"><path d="M4.200 3.200L11.600 11L4.200 18.800" fill="none" stroke="#1b4a84" stroke-width="5.600"/><path d="M4.200 3.200L11.600 11L4.200 18.800" fill="none" stroke="#3b8ad6" stroke-width="3.400"/></svg>
<svg class="a" style="left:153px;top:942px" width="21" height="21" viewBox="0 0 21 21"><path d="M7 0.900h6.400v6.200h6.200v6.400h-6.200v6.200H7v-6.200H0.900V7.100H7z" fill="#35c224" stroke="#1c6e12" stroke-width="1.300" stroke-linejoin="round"/><path d="M8.300 2.200h3.600v6.200h6.200v1.500H8.300z" fill="#6fe060" opacity="0.550"/></svg>
<svg class="a" style="left:179px;top:942px" width="22" height="21" viewBox="0 0 22 21"><g transform="rotate(45 10.65 9.75)"><path d="M7.550000000000001 -0.75h6.2v7.4h7.4v6.2h-7.4v7.4h-6.2v-7.4h-7.4v-6.2h7.4z" fill="#e32626" stroke="#8e1212" stroke-width="1.300" stroke-linejoin="round"/></g></svg>
<svg class="a" style="left:206px;top:942px" width="21" height="21" viewBox="0 0 21 21"><path d="M0.600 0.600H19.400V19.600H2.600L0.600 17.600z" fill="#8d8d8d" stroke="#7a7a7a" stroke-width="1"/><rect x="3" y="1.600" width="14" height="7.600" fill="#d6d6d6"/><path d="M3.600 3.600H16.400M3.600 5.600H16.400M3.600 7.400H16.400" stroke="#c0c0c0" stroke-width="0.700"/><rect x="5" y="12.200" width="10.400" height="7.400" fill="#c4c4c4"/><rect x="6.600" y="13.600" width="2.200" height="4.600" fill="#8a8a8a"/></svg>
<svg class="a" style="left:231px;top:943px" width="22" height="18" viewBox="0 0 22 18"><path d="M1.200 6.400L8 1.400L9.200 5.200C14.500 1.400 20.200 4 20.800 11.400L17 13.200C16.800 9.600 14 8.600 11 10.200L12.600 13.800L2 16.400z" fill="#b4b4b4" stroke="#a0a0a0" stroke-width="0.800" stroke-linejoin="round"/></svg>
<svg class="a" style="left:259px;top:940px" width="20" height="23" viewBox="0 0 20 23"><path d="M1.200 14.600L7.600 10H18.200V16L11 21.800L1.200 19.400z" fill="#a9c0d2" stroke="#6e879c" stroke-width="0.900" stroke-linejoin="round"/><path d="M1.200 14.600L11 17V21.800" fill="none" stroke="#e8f0f6" stroke-width="0.900"/><path d="M7.600 10.600L11 17L18 10.400" fill="#7f9db4"/><path d="M10.300 1.600h4.600V7.400h3L12.600 13.800L7.200 7.400h3.100z" fill="#f0602a" stroke="#b83a12" stroke-width="0.800" stroke-linejoin="round"/></svg>
<svg class="a" style="left:284px;top:941px" width="22" height="22" viewBox="0 0 22 22"><path d="M1.600 9.800C1.400 4.600 5 1.400 10 2L10.600 0.400L19 4.400L14.600 11.800L13.600 8.600C10 7.200 7.400 8.200 6.600 11.600z" fill="#39b54a" stroke="#1e7a2c" stroke-width="0.800" stroke-linejoin="round"/><path d="M20.600 11.600C20.800 17 17 20.400 12 19.800L11.400 21.400L3 17.200L5 9.800L8.400 13.400C11 14.600 14.600 13.600 15.600 10.200z" fill="#d42a2a" stroke="#8a1414" stroke-width="0.800" stroke-linejoin="round"/></svg>
<svg class="a" style="left:312px;top:941px" width="20" height="22" viewBox="0 0 20 22"><path d="M4 10.600V7a5 5 0 0 1 10 0V8.600" fill="none" stroke="#8ea2b6" stroke-width="2.600"/><rect x="1.400" y="9.800" width="14.800" height="10.600" rx="1.400" fill="#ecd75c" stroke="#a89a30" stroke-width="0.900"/><rect x="5" y="14" width="7" height="3" rx="1.400" fill="#9fb3c4"/><circle cx="13.600" cy="11.400" r="4.600" fill="#ffb31a" opacity="0.750"/><circle cx="13.600" cy="11.400" r="1.800" fill="#fff6d8"/></svg>
<svg class="a" style="left:337px;top:941px" width="22" height="22" viewBox="0 0 22 22"><path d="M2.400 5.400L8.600 1H20.400V13.400L14 20.600H1.200z" fill="#a4aab0" stroke="#6e747a" stroke-width="0.900" stroke-linejoin="round"/><path d="M2.400 5.400H14V20.400" fill="none" stroke="#70767c" stroke-width="0.800"/><path d="M14 5.400L20.400 1" stroke="#70767c" stroke-width="0.800"/><rect x="3.400" y="6.600" width="9.600" height="8" fill="#dfe3e6"/><path d="M3.400 8.400H13M3.400 11H13" stroke="#8a9096" stroke-width="0.900"/><path d="M1.400 20.600L3.400 15.600H12.600L14 20.600z" fill="#f4f4f4" stroke="#8a8a8a" stroke-width="0.700"/><rect x="4" y="4" width="3" height="1" fill="#3b9a3b"/></svg>
<svg class="a" style="left:363px;top:941px" width="22" height="22" viewBox="0 0 22 22"><path d="M2 20.400L15.600 6.200" stroke="#3a3a3a" stroke-width="2.400"/><path d="M2 20.400L15.600 6.200" stroke="#d8d8d8" stroke-width="1.200" stroke-dasharray="1.400 1.400"/><g fill="#f0de3a" stroke="#b09a18" stroke-width="0.600"><path d="M10 0.800l1.100 2.400l2.600 0.300l-1.900 1.800l0.500 2.600l-2.300 -1.300l-2.300 1.300l0.500 -2.600l-1.900 -1.800l2.600 -0.300z"/><path d="M16.600 0.200l0.800 1.700l1.900 0.200l-1.400 1.300l0.400 1.900l-1.700 -1l-1.700 1l0.400 -1.900l-1.400 -1.300l1.900 -0.200z"/><path d="M17.800 8.400l1.100 2.400l2.600 0.300l-1.900 1.800l0.500 2.600l-2.300 -1.300l-2.300 1.300l0.500 -2.600l-1.900 -1.800l2.600 -0.300z"/></g></svg>
<div class="a" style="left:856px;top:598px;width:512px;height:199px;background:#fff;box-shadow:0 0 0 1px rgba(0,0,0,0.05),0 4px 16px 1px rgba(0,0,0,0.34)">
<div class="a" style="left:0;top:145px;width:512px;height:54px;background:#f0f0f0"></div>
<div class="t" id="dt" style="left:11px;top:9px;height:22px;line-height:22px;font-size:15px;color:#000;letter-spacing:0.13px">Microix Workflow Modules</div>
<svg class="a" style="left:483px;top:13px" width="14" height="14" viewBox="0 0 14 14"><path d="M1 1L13 13M13 1L1 13" stroke="#8a8a8a" stroke-width="1" fill="none"/></svg>
<div class="t" id="dm" style="left:14.5px;top:69px;line-height:16.2px;font-size:13.5px;color:#151515;white-space:pre;-webkit-text-stroke:0.45px #151515"><span style="letter-spacing:0.39px">There are 1 inactive user(s) that are associated with workflow(s), would</span>
<span style="letter-spacing:0.48px">you like to remove them from workflow(s)?</span>
<span style="letter-spacing:0.06px">User(s) : Frederick E. Smith</span></div>
<div class="a" style="left:297px;top:158px;width:91px;height:26px;box-sizing:border-box;border:2px solid #0078d7;background:#e1e1e1;text-align:center;line-height:23px;font-size:13px;color:#000;-webkit-text-stroke:0.35px #000">Yes</div>
<div class="a" style="left:400px;top:158px;width:91px;height:26px;box-sizing:border-box;border:1px solid #adadad;background:#e1e1e1;text-align:center;line-height:25px;font-size:13px;color:#000;-webkit-text-stroke:0.35px #000">No</div>
</div>
</body></html>
